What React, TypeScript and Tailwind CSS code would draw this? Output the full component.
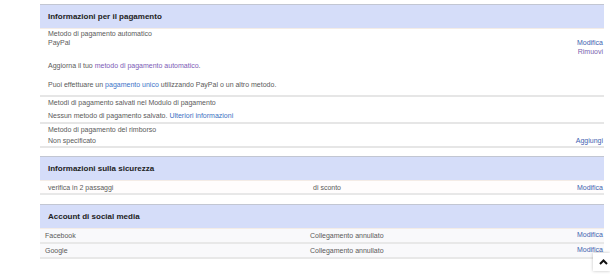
import React from "react";

const link = "text-[#4162b0]";

function Header({ title }: { title: string }) {
  return (
    <div className="h-[25px] border-t border-[#c2c6d2] bg-[#d5ddf9] flex items-center pl-[8px] font-bold text-[8px] text-[#222] border-b border-b-[#f4ece6]">
      {title}
    </div>
  );
}

export default function App() {
  return (
    <div
      className="w-[610px] h-[274px] bg-white relative overflow-hidden text-[7px] leading-[9px] text-[#5a5a5a]"
      style={{ fontFamily: '"Liberation Sans", Arial, sans-serif' }}
    >
      <div className="ml-[40px] w-[564px] pt-[4px]">
        {/* Section 1 */}
        <Header title="Informazioni per il pagamento" />
        <div className="flex justify-between pl-[8px]">
          <div>
            <div>Metodo di pagamento automatico</div>
            <div>PayPal</div>
          </div>
          <div className="mt-[9px] text-right pr-[1px]">
            <div className={link}>Modifica</div>
            <div className="text-[#7a5fae]">Rimuovi</div>
          </div>
        </div>
        <div className="pl-[8px] mt-[5px]">
          Aggiorna il tuo <span className="text-[#7d5bb6]">metodo di pagamento automatico</span>.
        </div>
        <div className="pl-[8px] mt-[10px] pb-[6px] border-b-2 border-[#e6e6e6]">
          Puoi effettuare un <span className="text-[#3b72c8]">pagamento unico</span> utilizzando PayPal o un altro metodo.
        </div>
        <div className="pl-[8px] mt-[1px]">Metodi di pagamento salvati nel Modulo di pagamento</div>
        <div className="pl-[8px] mt-[4px] pb-[2px] border-b-2 border-[#e6e6e6]">
          Nessun metodo di pagamento salvato. <span className="text-[#3b6fc2]">Ulteriori informazioni</span>
        </div>
        <div className="pl-[8px] mt-[1px]">Metodo di pagamento del rimborso</div>
        <div className="flex justify-between pl-[8px] mt-[2px] pb-[1px] border-b-2 border-[#e6e6e6]">
          <span>Non specificato</span>
          <span className={`${link} pr-[1px]`}>Aggiungi</span>
        </div>

        {/* Section 2 */}
        <div className="mt-[8px]">
          <Header title="Informazioni sulla sicurezza" />
        </div>
        <div className="h-[14px] flex items-center border-b-2 border-[#e8e8e8] bg-[#fffdfd]">
          <div className="w-[273px] pl-[8px]">verifica in 2 passaggi</div>
          <div className="flex-1">di sconto</div>
          <div className={`${link} pr-[1px]`}>Modifica</div>
        </div>

        {/* Section 3 */}
        <div className="mt-[9px]">
          <Header title="Account di social media" />
        </div>
        <div className="h-[15px] flex items-center border-b-2 border-[#e8e8e8] bg-[#f9f9fb]">
          <div className="w-[270px] pl-[5px]">Facebook</div>
          <div className="flex-1">Collegamento annullato</div>
          <div className={`${link} pr-[1px] -mt-[2px]`}>Modifica</div>
        </div>
        <div className="h-[15px] flex items-center border-b-2 border-[#e8e8e8] bg-[#f9f9fb]">
          <div className="w-[270px] pl-[5px]">Google</div>
          <div className="flex-1">Collegamento annullato</div>
          <div className={`${link} pr-[1px] -mt-[2px]`}>Modifica</div>
        </div>
      </div>

      {/* scroll to top button */}
      <div className="absolute left-[593px] top-[253px] w-[17px] h-[18px] bg-white shadow-[0_0_3px_rgba(0,0,0,0.25)] flex items-center justify-center">
        <svg width="9" height="6" viewBox="0 0 9 6" className="ml-[3px]">
          <polyline points="1,5 4.5,1.5 8,5" fill="none" stroke="#111" strokeWidth="2" />
        </svg>
      </div>
    </div>
  );
}
